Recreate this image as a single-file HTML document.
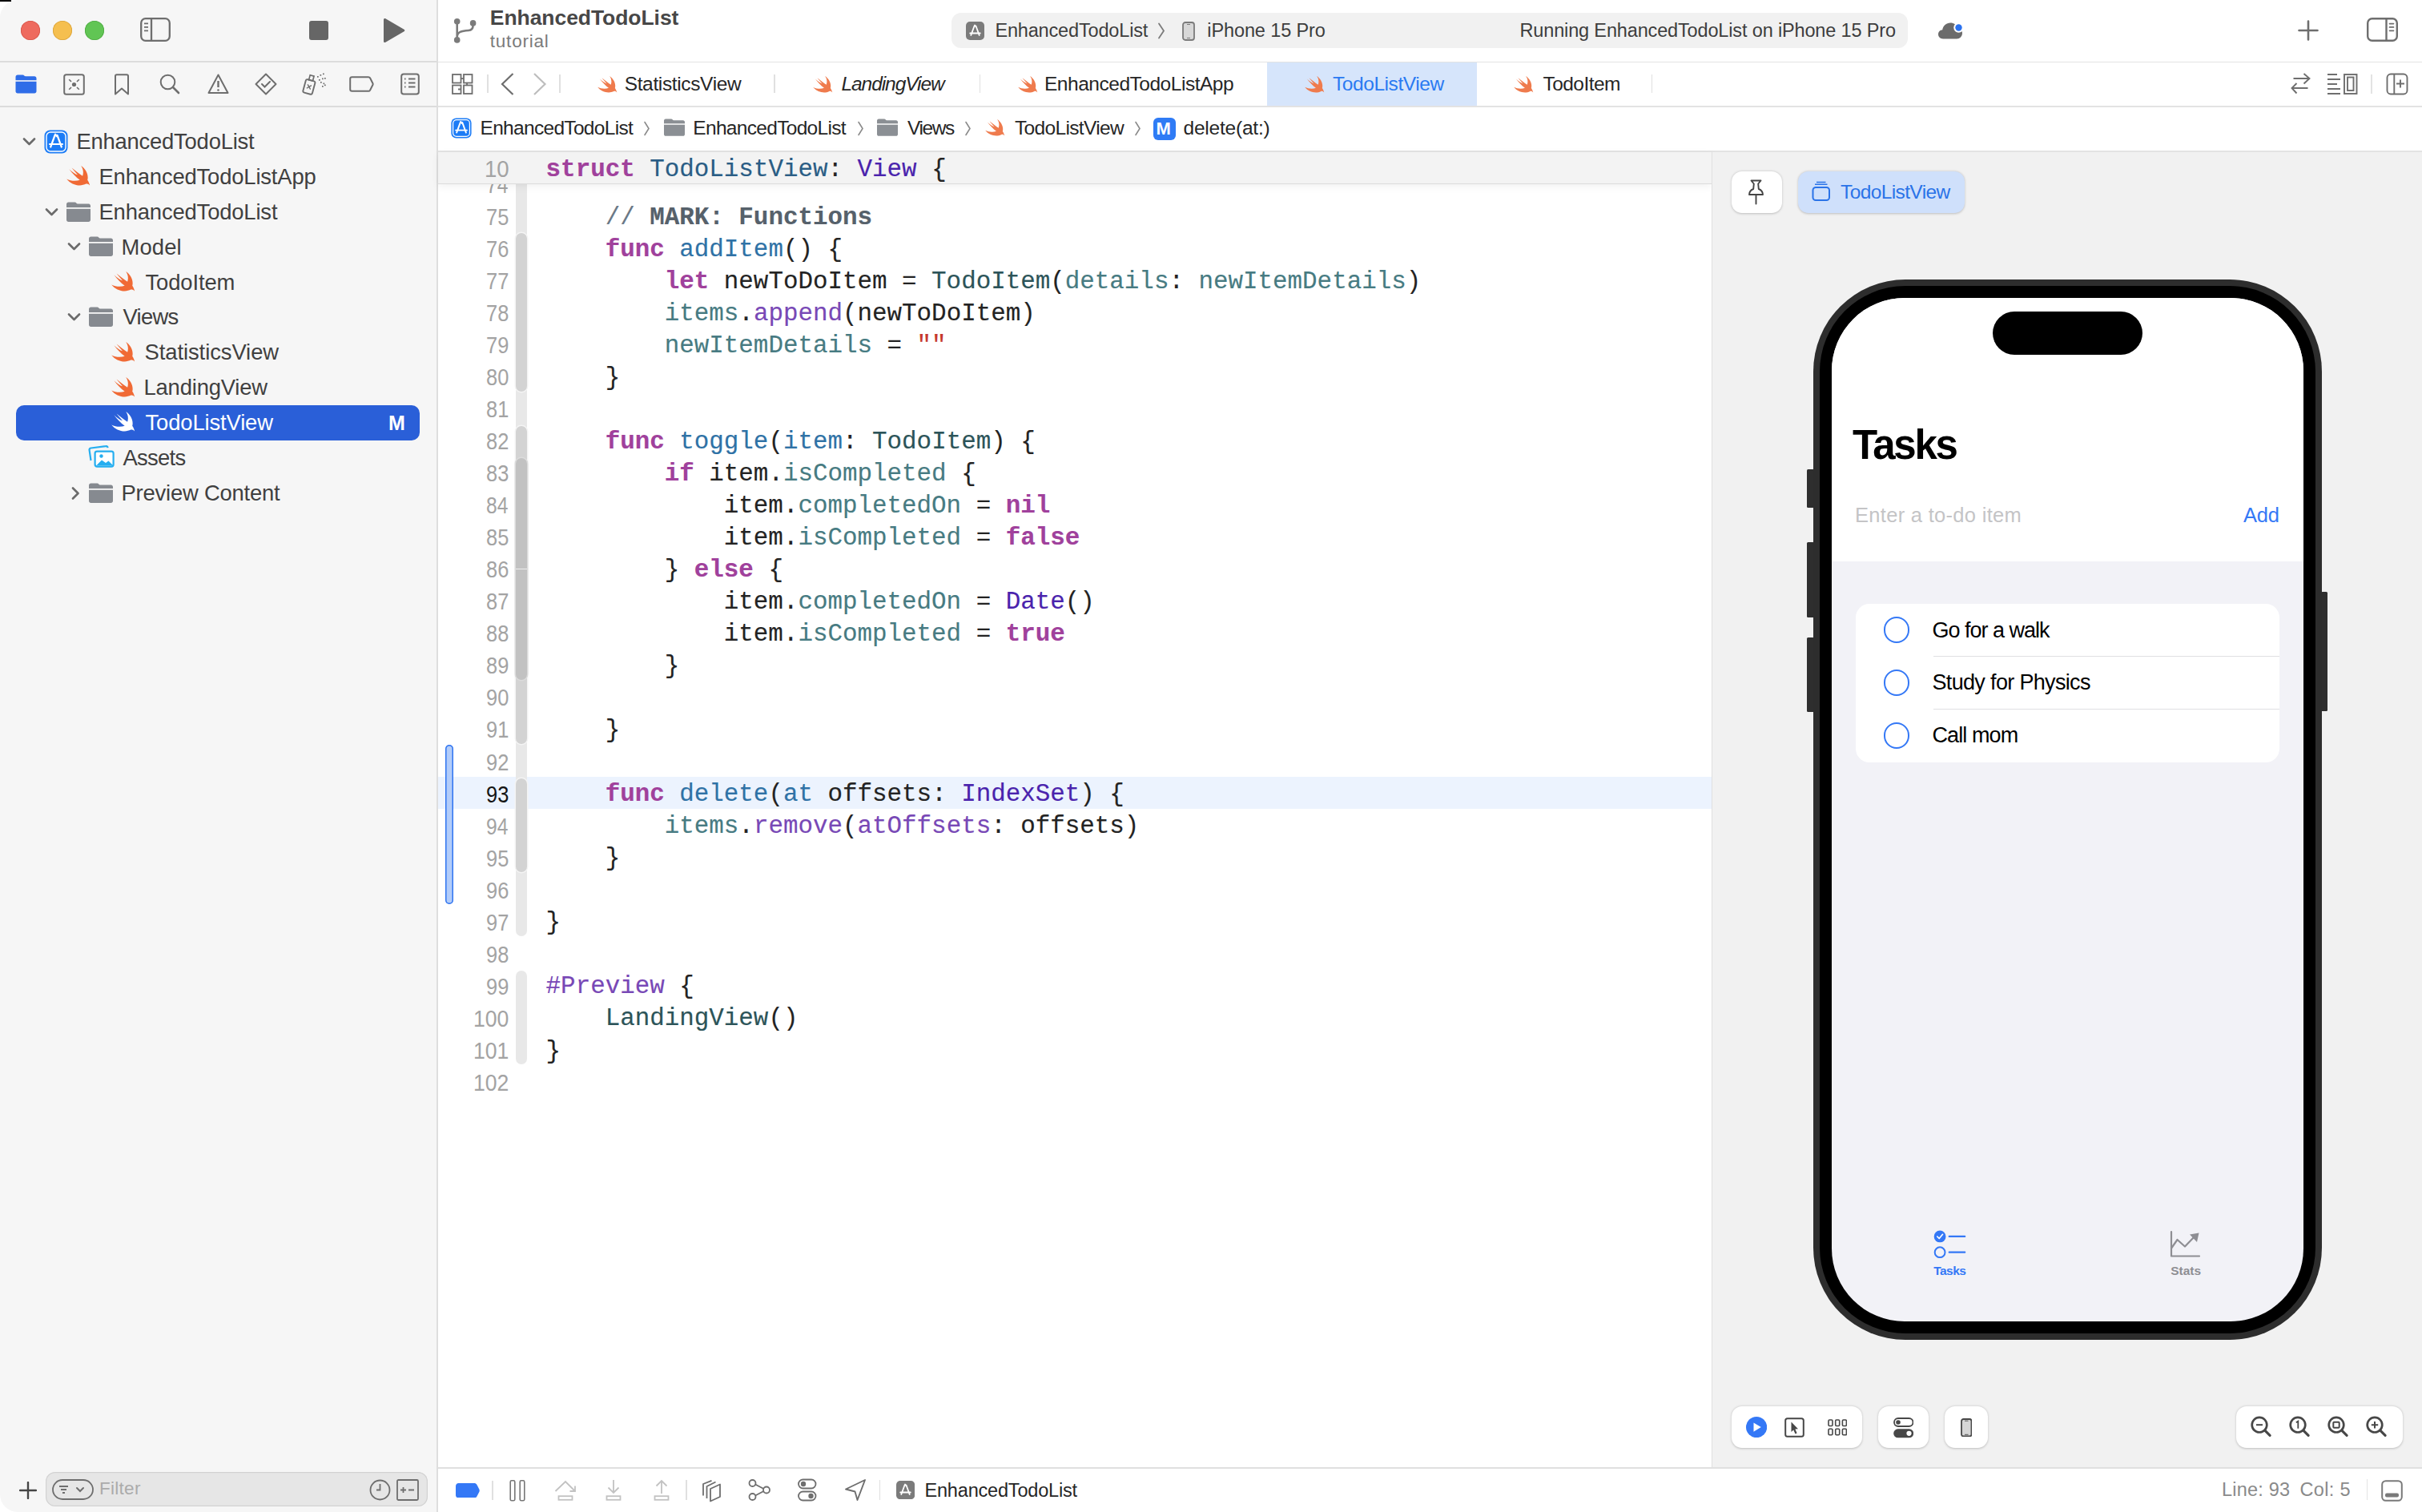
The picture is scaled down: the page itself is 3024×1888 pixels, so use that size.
<!DOCTYPE html>
<html><head><meta charset="utf-8"><title>Xcode</title>
<style>
html,body{margin:0;padding:0;width:3024px;height:1888px;overflow:hidden;background:#ffffff;}
body{position:relative;font-family:"Liberation Sans",sans-serif;}
.a{position:absolute;}
.t{position:absolute;white-space:pre;line-height:1;}

</style></head><body>
<div class="a" style="left:0px;top:0px;width:545px;height:1888px;background:#f6f6f6;border-radius:0px;border-top-left-radius:22px;border-bottom-left-radius:22px;"></div>
<div class="a" style="left:545px;top:0px;width:1.5px;height:1888px;background:#dedede;border-radius:0px;"></div>
<div class="a" style="left:0px;top:0px;width:14px;height:1.5px;background:#000000;border-radius:0px;"></div>
<div class="a" style="left:0px;top:76.2px;width:545px;height:1.8px;background:#dcdcdc;border-radius:0px;"></div>
<div class="a" style="left:0px;top:132px;width:545px;height:1.8px;background:#dcdcdc;border-radius:0px;"></div>
<div class="a" style="left:25.700000000000003px;top:26px;width:24px;height:24px;border-radius:50%;background:#ee6a5e;box-shadow:inset 0 0 0 0.8px #d5554a;"></div>
<div class="a" style="left:65.9px;top:26px;width:24px;height:24px;border-radius:50%;background:#f5bf4f;box-shadow:inset 0 0 0 0.8px #d9a23a;"></div>
<div class="a" style="left:105.7px;top:26px;width:24px;height:24px;border-radius:50%;background:#61c554;box-shadow:inset 0 0 0 0.8px #4ea942;"></div>
<svg class="a" style="left:175px;top:22px;" width="39" height="30" viewBox="0 0 39 30"><rect x="1.2" y="1.2" width="35.6" height="27.6" rx="5.5" fill="none" stroke="#6e6e6e" stroke-width="2.3"/><path d="M14 1.5V28.5" stroke="#6e6e6e" stroke-width="2.3"/><path d="M5 7.3H10M5 11.8H10M5 16.3H10" stroke="#6e6e6e" stroke-width="1.7"/></svg>
<div class="a" style="left:386px;top:26px;width:24px;height:24px;background:#666666;border-radius:3px;"></div>
<svg class="a" style="left:477px;top:22px;" width="30" height="32" viewBox="0 0 30 32"><path d="M2 2.5C2 1.2 3.3 0.5 4.4 1.2L27.5 14.7C28.6 15.4 28.6 16.6 27.5 17.3L4.4 30.8C3.3 31.5 2 30.8 2 29.5Z" fill="#666666"/></svg>
<svg class="a" style="left:19px;top:93px;" width="27" height="24" viewBox="0 0 27 24"><path fill="#2f6de8" d="M3 0.5H9.5C11 0.5 11.5 2.3 13 2.3H24C25.4 2.3 26.5 3.4 26.5 4.8V21C26.5 22.4 25.4 23.5 24 23.5H3C1.6 23.5 0.5 22.4 0.5 21V3C0.5 1.6 1.6 0.5 3 0.5Z"/><rect x="0" y="7.2" width="27" height="1.6" fill="#f6f6f6"/></svg>
<svg class="a" style="left:79px;top:92px;" width="27" height="27" viewBox="0 0 27 27"><rect x="1.2" y="1.2" width="24.6" height="24.6" rx="2.5" fill="none" stroke="#6e6e6e" stroke-width="2"/><circle cx="13.5" cy="13.5" r="2.6" fill="#6e6e6e"/><path d="M7.2 7.2L10 10M19.8 7.2L17 10M7.2 19.8L10 17M19.8 19.8L17 17" stroke="#6e6e6e" stroke-width="1.6"/></svg>
<svg class="a" style="left:142px;top:92px;" width="20" height="27" viewBox="0 0 20 27"><path d="M2 25.5V3C2 2 2.8 1.2 3.8 1.2H16.2C17.2 1.2 18 2 18 3V25.5L10 18.5Z" fill="none" stroke="#6e6e6e" stroke-width="2" stroke-linejoin="round"/></svg>
<svg class="a" style="left:199px;top:92px;" width="27" height="27" viewBox="0 0 27 27"><circle cx="10.5" cy="10.5" r="8.8" fill="none" stroke="#6e6e6e" stroke-width="2"/><path d="M17 17L24 24" stroke="#6e6e6e" stroke-width="2.6" stroke-linecap="round"/></svg>
<svg class="a" style="left:259px;top:92px;" width="27" height="26" viewBox="0 0 27 26"><path d="M13.5 1.5L25.5 24H1.5Z" fill="none" stroke="#6e6e6e" stroke-width="2" stroke-linejoin="round"/><path d="M13.5 9V17" stroke="#6e6e6e" stroke-width="2.4"/><circle cx="13.5" cy="20.5" r="1.3" fill="#6e6e6e"/></svg>
<svg class="a" style="left:318px;top:91px;" width="28" height="28" viewBox="0 0 28 28"><path d="M14 1.5L26.5 14L14 26.5L1.5 14Z" fill="none" stroke="#6e6e6e" stroke-width="2" stroke-linejoin="round"/><path d="M9 14L12.5 17.5L19 11" fill="none" stroke="#6e6e6e" stroke-width="2" stroke-linecap="round"/></svg>
<svg class="a" style="left:377px;top:91px;" width="31" height="28" viewBox="0 0 31 28"><g transform="rotate(15 9 17)"><rect x="3" y="9" width="12" height="17" rx="2" fill="none" stroke="#6e6e6e" stroke-width="1.9"/><rect x="6.5" y="3" width="5" height="6" fill="none" stroke="#6e6e6e" stroke-width="1.7"/><path d="M6.5 15L11.5 20M11.5 15L6.5 20" stroke="#6e6e6e" stroke-width="1.4"/></g><g fill="#6e6e6e"><rect x="19" y="4" width="1.7" height="1.7"/><rect x="22.5" y="2" width="1.7" height="1.7"/><rect x="26" y="0.5" width="1.7" height="1.7"/><rect x="21" y="8" width="1.7" height="1.7"/><rect x="25" y="6.5" width="1.7" height="1.7"/><rect x="28" y="6" width="1.7" height="1.7"/><rect x="23" y="11" width="1.7" height="1.7"/><rect x="26.5" y="12.5" width="1.7" height="1.7"/><rect x="25" y="16" width="1.7" height="1.7"/><rect x="28" y="14.5" width="1.7" height="1.7"/></g></svg>
<svg class="a" style="left:436px;top:95px;" width="31" height="20" viewBox="0 0 31 20"><path d="M3.5 1.2H24C25 1.2 25.6 1.6 26 2.3L29.4 9C29.7 9.6 29.7 10.4 29.4 11L26 17.7C25.6 18.4 25 18.8 24 18.8H3.5C2.2 18.8 1.2 17.8 1.2 16.5V3.5C1.2 2.2 2.2 1.2 3.5 1.2Z" fill="none" stroke="#6e6e6e" stroke-width="2"/></svg>
<svg class="a" style="left:500px;top:91px;" width="24" height="28" viewBox="0 0 24 28"><rect x="1.2" y="1.5" width="21.6" height="25" rx="2.8" fill="none" stroke="#6e6e6e" stroke-width="2"/><path d="M10 7.6H18.5M10 12.6H18.5M10 17.6H18.5" stroke="#6e6e6e" stroke-width="2"/><path d="M5 7.6H6.5M5 12.6H6.5M5 17.6H6.5" stroke="#6e6e6e" stroke-width="2"/></svg>
<svg class="a" style="left:27.5px;top:171.7px;" width="17" height="10" viewBox="0 0 16 10"><path d="M1.5 1.5L8 8L14.5 1.5" fill="none" stroke="#6b6b6b" stroke-width="2.6" stroke-linecap="round" stroke-linejoin="round"/></svg>
<svg class="a" style="left:54.5px;top:161.7px;" width="30" height="30" viewBox="0 0 30 30"><rect x="0.5" y="0.5" width="29" height="29" rx="7" fill="#1c7cf6"/><rect x="3" y="3" width="24" height="24" rx="5" fill="none" stroke="#ffffff" stroke-width="1.4"/><g stroke="#ffffff" stroke-width="2.2" stroke-linecap="round" fill="none"><path d="M13.5 7L8.2 21.5M16.5 7L21.8 21.5M14 5.7L16 8.2M7 18H23"/></g></svg>
<div class="t" style="left:95.50px;top:162.91px;font-family:'Liberation Sans';font-size:27.4px;color:#404040;letter-spacing:-0.218px;">EnhancedTodoList</div>
<svg class="a" style="left:83.3px;top:207.1px;" width="30" height="25" viewBox="0 0 30 25"><path fill="#f06a35" d="M18.2 0C24 4 28 11 26.2 17.8C27.6 19.8 28.6 22 29.1 24.6C27.8 22.8 26.2 22 24.5 22.6C17 26.5 6 24 0.26 16.4C5 19 12 19.5 16.7 17.7C12 14.5 7 9 3.4 4.2C7 7.5 11 10.5 14 11.35C11.5 8.5 8.5 5 6.6 2.5C11 6 16 10 20.1 12.7C21.5 8.5 21 4 18.2 0Z"/></svg>
<div class="t" style="left:123.50px;top:206.81px;font-family:'Liberation Sans';font-size:27.4px;color:#404040;letter-spacing:-0.160px;">EnhancedTodoListApp</div>
<svg class="a" style="left:55.5px;top:259.5px;" width="17" height="10" viewBox="0 0 16 10"><path d="M1.5 1.5L8 8L14.5 1.5" fill="none" stroke="#6b6b6b" stroke-width="2.6" stroke-linecap="round" stroke-linejoin="round"/></svg>
<svg class="a" style="left:83.0px;top:251.5px;" width="30" height="25" viewBox="0 0 30 25"><path fill="#868a90" d="M2.5 0.5H10.5C12 0.5 12.5 2.5 14 2.5H27.5C28.9 2.5 30 3.6 30 5V22.5C30 23.9 28.9 25 27.5 25H2.5C1.1 25 0 23.9 0 22.5V3C0 1.6 1.1 0.5 2.5 0.5Z"/><rect x="0" y="7" width="30" height="1.8" fill="#f6f6f6"/></svg>
<div class="t" style="left:123.50px;top:250.71px;font-family:'Liberation Sans';font-size:27.4px;color:#404040;letter-spacing:-0.158px;">EnhancedTodoList</div>
<svg class="a" style="left:83.5px;top:303.4px;" width="17" height="10" viewBox="0 0 16 10"><path d="M1.5 1.5L8 8L14.5 1.5" fill="none" stroke="#6b6b6b" stroke-width="2.6" stroke-linecap="round" stroke-linejoin="round"/></svg>
<svg class="a" style="left:111.0px;top:295.4px;" width="30" height="25" viewBox="0 0 30 25"><path fill="#868a90" d="M2.5 0.5H10.5C12 0.5 12.5 2.5 14 2.5H27.5C28.9 2.5 30 3.6 30 5V22.5C30 23.9 28.9 25 27.5 25H2.5C1.1 25 0 23.9 0 22.5V3C0 1.6 1.1 0.5 2.5 0.5Z"/><rect x="0" y="7" width="30" height="1.8" fill="#f6f6f6"/></svg>
<div class="t" style="left:151.50px;top:294.61px;font-family:'Liberation Sans';font-size:27.4px;color:#404040;letter-spacing:0.121px;">Model</div>
<svg class="a" style="left:139.3px;top:338.79999999999995px;" width="30" height="25" viewBox="0 0 30 25"><path fill="#f06a35" d="M18.2 0C24 4 28 11 26.2 17.8C27.6 19.8 28.6 22 29.1 24.6C27.8 22.8 26.2 22 24.5 22.6C17 26.5 6 24 0.26 16.4C5 19 12 19.5 16.7 17.7C12 14.5 7 9 3.4 4.2C7 7.5 11 10.5 14 11.35C11.5 8.5 8.5 5 6.6 2.5C11 6 16 10 20.1 12.7C21.5 8.5 21 4 18.2 0Z"/></svg>
<div class="t" style="left:181.50px;top:338.51px;font-family:'Liberation Sans';font-size:27.4px;color:#404040;letter-spacing:-0.121px;">TodoItem</div>
<svg class="a" style="left:83.5px;top:391.2px;" width="17" height="10" viewBox="0 0 16 10"><path d="M1.5 1.5L8 8L14.5 1.5" fill="none" stroke="#6b6b6b" stroke-width="2.6" stroke-linecap="round" stroke-linejoin="round"/></svg>
<svg class="a" style="left:111.0px;top:383.2px;" width="30" height="25" viewBox="0 0 30 25"><path fill="#868a90" d="M2.5 0.5H10.5C12 0.5 12.5 2.5 14 2.5H27.5C28.9 2.5 30 3.6 30 5V22.5C30 23.9 28.9 25 27.5 25H2.5C1.1 25 0 23.9 0 22.5V3C0 1.6 1.1 0.5 2.5 0.5Z"/><rect x="0" y="7" width="30" height="1.8" fill="#f6f6f6"/></svg>
<div class="t" style="left:153.50px;top:382.41px;font-family:'Liberation Sans';font-size:27.4px;color:#404040;letter-spacing:-0.718px;">Views</div>
<svg class="a" style="left:139.3px;top:426.59999999999997px;" width="30" height="25" viewBox="0 0 30 25"><path fill="#f06a35" d="M18.2 0C24 4 28 11 26.2 17.8C27.6 19.8 28.6 22 29.1 24.6C27.8 22.8 26.2 22 24.5 22.6C17 26.5 6 24 0.26 16.4C5 19 12 19.5 16.7 17.7C12 14.5 7 9 3.4 4.2C7 7.5 11 10.5 14 11.35C11.5 8.5 8.5 5 6.6 2.5C11 6 16 10 20.1 12.7C21.5 8.5 21 4 18.2 0Z"/></svg>
<div class="t" style="left:180.50px;top:426.31px;font-family:'Liberation Sans';font-size:27.4px;color:#404040;letter-spacing:-0.068px;">StatisticsView</div>
<svg class="a" style="left:139.3px;top:470.5px;" width="30" height="25" viewBox="0 0 30 25"><path fill="#f06a35" d="M18.2 0C24 4 28 11 26.2 17.8C27.6 19.8 28.6 22 29.1 24.6C27.8 22.8 26.2 22 24.5 22.6C17 26.5 6 24 0.26 16.4C5 19 12 19.5 16.7 17.7C12 14.5 7 9 3.4 4.2C7 7.5 11 10.5 14 11.35C11.5 8.5 8.5 5 6.6 2.5C11 6 16 10 20.1 12.7C21.5 8.5 21 4 18.2 0Z"/></svg>
<div class="t" style="left:179.50px;top:470.21px;font-family:'Liberation Sans';font-size:27.4px;color:#404040;letter-spacing:-0.178px;">LandingView</div>
<div class="a" style="left:20px;top:506.4px;width:504px;height:44px;background:#2a5fd8;border-radius:10px;"></div>
<svg class="a" style="left:139.3px;top:514.4px;" width="30" height="25" viewBox="0 0 30 25"><path fill="#ffffff" d="M18.2 0C24 4 28 11 26.2 17.8C27.6 19.8 28.6 22 29.1 24.6C27.8 22.8 26.2 22 24.5 22.6C17 26.5 6 24 0.26 16.4C5 19 12 19.5 16.7 17.7C12 14.5 7 9 3.4 4.2C7 7.5 11 10.5 14 11.35C11.5 8.5 8.5 5 6.6 2.5C11 6 16 10 20.1 12.7C21.5 8.5 21 4 18.2 0Z"/></svg>
<div class="t" style="left:181.50px;top:514.11px;font-family:'Liberation Sans';font-size:27.4px;color:#ffffff;letter-spacing:-0.128px;">TodoListView</div>
<svg class="a" style="left:109.5px;top:555.8px;" width="33" height="28" viewBox="0 0 33 28"><g fill="none" stroke="#25aef0" stroke-width="2.2"><path d="M3.5 19L1.6 6.2C1.4 4.9 2.3 3.7 3.6 3.5L22 1.2C23.3 1 24.4 1.9 24.6 3.2"/></g><rect x="8.6" y="7.6" width="23" height="19" rx="2.5" fill="#fff" stroke="#25aef0" stroke-width="2.2"/><path d="M10 25.5L17 18.5L22 22L25.5 19.5L30.5 24.5V25.5Z" fill="#25aef0"/><circle cx="16.5" cy="13.5" r="2.2" fill="#25aef0"/></svg>
<div class="t" style="left:153.50px;top:558.01px;font-family:'Liberation Sans';font-size:27.4px;color:#404040;letter-spacing:-0.701px;">Assets</div>
<svg class="a" style="left:89px;top:607.7px;" width="11" height="16" viewBox="0 0 10 16"><path d="M1.5 1.5L8 8L1.5 14.5" fill="none" stroke="#6b6b6b" stroke-width="2.6" stroke-linecap="round" stroke-linejoin="round"/></svg>
<svg class="a" style="left:111.0px;top:602.7px;" width="30" height="25" viewBox="0 0 30 25"><path fill="#868a90" d="M2.5 0.5H10.5C12 0.5 12.5 2.5 14 2.5H27.5C28.9 2.5 30 3.6 30 5V22.5C30 23.9 28.9 25 27.5 25H2.5C1.1 25 0 23.9 0 22.5V3C0 1.6 1.1 0.5 2.5 0.5Z"/><rect x="0" y="7" width="30" height="1.8" fill="#f6f6f6"/></svg>
<div class="t" style="left:151.50px;top:601.91px;font-family:'Liberation Sans';font-size:27.4px;color:#404040;letter-spacing:-0.197px;">Preview Content</div>
<div class="t" style="left:485.00px;top:516.15px;font-family:'Liberation Sans';font-size:25px;color:#ffffff;font-weight:700;">M</div>
<svg class="a" style="left:24px;top:1850px;" width="22" height="22" viewBox="0 0 22 22"><path d="M11 1V21M1 11H21" stroke="#454545" stroke-width="2.4" stroke-linecap="round"/></svg>
<div class="a" style="left:56.6px;top:1838.3px;width:477px;height:43px;background:#e6e6e6;border-radius:12px;box-shadow:inset 0 0 0 1.2px #d2d2d2;"></div>
<svg class="a" style="left:65px;top:1847px;" width="52" height="26" viewBox="0 0 52 26"><rect x="1" y="1" width="50" height="24" rx="12" fill="none" stroke="#6e6e6e" stroke-width="1.8"/><path d="M9 9H20M11 13H18M13 17H16" stroke="#6e6e6e" stroke-width="1.8"/><path d="M31 11L35 15L39 11" fill="none" stroke="#6e6e6e" stroke-width="2" stroke-linecap="round"/></svg>
<div class="t" style="left:123.90px;top:1848.28px;font-family:'Liberation Sans';font-size:22.5px;color:#ababab;letter-spacing:0.299px;">Filter</div>
<svg class="a" style="left:461px;top:1847px;" width="27" height="27" viewBox="0 0 27 27"><circle cx="13.5" cy="13.5" r="12" fill="none" stroke="#6e6e6e" stroke-width="1.8"/><path d="M13.5 6V13.5H9" fill="none" stroke="#6e6e6e" stroke-width="1.8"/></svg>
<svg class="a" style="left:495px;top:1847px;" width="28" height="27" viewBox="0 0 28 27"><rect x="1" y="1" width="26" height="25" rx="1.5" fill="none" stroke="#6e6e6e" stroke-width="1.8"/><path d="M5 13.5H12M8.5 10V17M15 13.5H22" stroke="#6e6e6e" stroke-width="1.8"/></svg>
<div class="a" style="left:546.5px;top:76.5px;width:2478px;height:1.5px;background:#e3e3e3;border-radius:0px;"></div>
<div class="a" style="left:546.5px;top:132px;width:2478px;height:1.5px;background:#e3e3e3;border-radius:0px;"></div>
<div class="a" style="left:546.5px;top:188px;width:2478px;height:1.5px;background:#e3e3e3;border-radius:0px;"></div>
<svg class="a" style="left:562px;top:18px;" width="36" height="38" viewBox="0 0 36 38"><g fill="#7b7b7b"><circle cx="8.7" cy="8.7" r="3.8"/><circle cx="28.6" cy="10.9" r="3.8"/><circle cx="8.7" cy="31.9" r="3.8"/></g><path d="M8.7 9V32M28.6 11V13.5C28.6 17.5 27 19.8 23 20C14 20.5 9 22 8.7 28" fill="none" stroke="#7b7b7b" stroke-width="2.6"/></svg>
<div class="t" style="left:611.80px;top:9.28px;font-family:'Liberation Sans';font-size:26.5px;color:#474747;font-weight:700;letter-spacing:-0.061px;">EnhancedTodoList</div>
<div class="t" style="left:611.80px;top:40.67px;font-family:'Liberation Sans';font-size:22.5px;color:#7b7b7b;letter-spacing:0.781px;">tutorial</div>
<div class="a" style="left:1188px;top:16px;width:1194px;height:44px;background:#f1f1f1;border-radius:12px;"></div>
<svg class="a" style="left:1206px;top:26.8px;" width="23" height="23" viewBox="0 0 23 23"><rect x="0" y="0" width="23" height="23" rx="5" fill="#7b7b7b"/><g stroke="#fff" stroke-width="1.8" stroke-linecap="round" fill="none"><path d="M10.5 5.5L6.3 17M12.5 5.5L16.7 17M11 4.5L12.5 6.5M5.2 14.5H17.8"/></g></svg>
<div class="t" style="left:1242.40px;top:26.82px;font-family:'Liberation Sans';font-size:23.5px;color:#3d3d3d;letter-spacing:-0.163px;">EnhancedTodoList</div>
<svg class="a" style="left:1445px;top:28px;" width="10" height="21" viewBox="0 0 10 21"><path d="M2 1.5L8 10.5L2 19.5" fill="none" stroke="#7b7b7b" stroke-width="1.8" stroke-linecap="round"/></svg>
<svg class="a" style="left:1476px;top:26.8px;" width="16" height="24" viewBox="0 0 16 24"><rect x="1" y="1" width="14" height="22" rx="3" fill="#d8d8d8" stroke="#7b7b7b" stroke-width="1.8"/><path d="M6 3.5H10M6 20.5H10" stroke="#7b7b7b" stroke-width="1"/></svg>
<div class="t" style="left:1507.30px;top:26.82px;font-family:'Liberation Sans';font-size:23.5px;color:#3d3d3d;letter-spacing:-0.114px;">iPhone 15 Pro</div>
<div class="t" style="left:1897.50px;top:26.82px;font-family:'Liberation Sans';font-size:23.5px;color:#3d3d3d;letter-spacing:-0.150px;">Running EnhancedTodoList on iPhone 15 Pro</div>
<svg class="a" style="left:2419px;top:26px;" width="36" height="24" viewBox="0 0 36 24"><path d="M7 22.5C3.5 22.5 1 20 1 16.8C1 13.8 3.2 11.5 6.2 11.2C7 6.2 11 2.5 16.2 2.5C20.5 2.5 24 5 25.5 8.8C28.5 9.2 31 11.8 31 15.5C31 19.2 28 22.5 24.2 22.5Z" fill="#6b6b6b"/><circle cx="26.5" cy="8.5" r="6.2" fill="#ffffff"/><circle cx="26.5" cy="8.5" r="4.2" fill="#2a72f0"/></svg>
<svg class="a" style="left:2869px;top:25px;" width="26" height="26" viewBox="0 0 26 26"><path d="M13 1.5V24.5M1.5 13H24.5" stroke="#6e6e6e" stroke-width="2.6" stroke-linecap="round"/></svg>
<svg class="a" style="left:2955px;top:22px;" width="39" height="30" viewBox="0 0 39 30"><rect x="1.2" y="1.2" width="36.6" height="27.6" rx="5.5" fill="none" stroke="#6e6e6e" stroke-width="2.4"/><path d="M24.5 1.5V28.5" stroke="#6e6e6e" stroke-width="2.4"/><path d="M28.5 7.6H33.5M28.5 11.9H33.5M28.5 16.3H33.5" stroke="#6e6e6e" stroke-width="1.7" stroke-linecap="round"/></svg>
<svg class="a" style="left:564px;top:92px;" width="27" height="26" viewBox="0 0 27 26"><g fill="none" stroke="#6e6e6e" stroke-width="1.8"><rect x="1" y="1" width="10.5" height="10.5"/><rect x="15" y="1" width="10.5" height="10.5"/><rect x="1" y="14.5" width="10.5" height="10.5"/><rect x="15" y="14.5" width="10.5" height="10.5"/><path d="M11.5 6.2H15M19 11.5V14.5M8 19.5H11.5"/></g></svg>
<div class="a" style="left:608.3px;top:93.2px;width:1.5px;height:23.3px;background:#e0e0e0;border-radius:0px;"></div>
<svg class="a" style="left:624px;top:90px;" width="20" height="30" viewBox="0 0 20 30"><path d="M16.5 2L3 15L16.5 28" fill="none" stroke="#6e6e6e" stroke-width="2.2"/></svg>
<svg class="a" style="left:664px;top:90px;" width="20" height="30" viewBox="0 0 20 30"><path d="M3 2L16.5 15L3 28" fill="none" stroke="#bdbdbd" stroke-width="2.2"/></svg>
<div class="a" style="left:698.3px;top:93.2px;width:1.5px;height:23.3px;background:#e0e0e0;border-radius:0px;"></div>
<div class="a" style="left:1582px;top:77.8px;width:262px;height:54.5px;background:#d6e5fb;border-radius:0px;"></div>
<svg class="a" style="left:745.7px;top:94.7px;" width="25" height="21" viewBox="0 0 30 25"><path fill="#ef7b4d" d="M18.2 0C24 4 28 11 26.2 17.8C27.6 19.8 28.6 22 29.1 24.6C27.8 22.8 26.2 22 24.5 22.6C17 26.5 6 24 0.26 16.4C5 19 12 19.5 16.7 17.7C12 14.5 7 9 3.4 4.2C7 7.5 11 10.5 14 11.35C11.5 8.5 8.5 5 6.6 2.5C11 6 16 10 20.1 12.7C21.5 8.5 21 4 18.2 0Z"/></svg>
<div class="t" style="left:779.70px;top:92.67px;font-family:'Liberation Sans';font-size:24.5px;color:#262626;letter-spacing:-0.361px;">StatisticsView</div>
<svg class="a" style="left:1014.8px;top:94.7px;" width="25" height="21" viewBox="0 0 30 25"><path fill="#ef7b4d" d="M18.2 0C24 4 28 11 26.2 17.8C27.6 19.8 28.6 22 29.1 24.6C27.8 22.8 26.2 22 24.5 22.6C17 26.5 6 24 0.26 16.4C5 19 12 19.5 16.7 17.7C12 14.5 7 9 3.4 4.2C7 7.5 11 10.5 14 11.35C11.5 8.5 8.5 5 6.6 2.5C11 6 16 10 20.1 12.7C21.5 8.5 21 4 18.2 0Z"/></svg>
<div class="t" style="left:1050.50px;top:92.67px;font-family:'Liberation Sans';font-size:24.5px;color:#262626;font-style:italic;letter-spacing:-1.067px;">LandingView</div>
<svg class="a" style="left:1270.8px;top:94.7px;" width="25" height="21" viewBox="0 0 30 25"><path fill="#ef7b4d" d="M18.2 0C24 4 28 11 26.2 17.8C27.6 19.8 28.6 22 29.1 24.6C27.8 22.8 26.2 22 24.5 22.6C17 26.5 6 24 0.26 16.4C5 19 12 19.5 16.7 17.7C12 14.5 7 9 3.4 4.2C7 7.5 11 10.5 14 11.35C11.5 8.5 8.5 5 6.6 2.5C11 6 16 10 20.1 12.7C21.5 8.5 21 4 18.2 0Z"/></svg>
<div class="t" style="left:1304.00px;top:92.67px;font-family:'Liberation Sans';font-size:24.5px;color:#262626;letter-spacing:-0.476px;">EnhancedTodoListApp</div>
<svg class="a" style="left:1628.8px;top:94.7px;" width="25" height="21" viewBox="0 0 30 25"><path fill="#ef7b4d" d="M18.2 0C24 4 28 11 26.2 17.8C27.6 19.8 28.6 22 29.1 24.6C27.8 22.8 26.2 22 24.5 22.6C17 26.5 6 24 0.26 16.4C5 19 12 19.5 16.7 17.7C12 14.5 7 9 3.4 4.2C7 7.5 11 10.5 14 11.35C11.5 8.5 8.5 5 6.6 2.5C11 6 16 10 20.1 12.7C21.5 8.5 21 4 18.2 0Z"/></svg>
<div class="t" style="left:1664.00px;top:92.67px;font-family:'Liberation Sans';font-size:24.5px;color:#2a7af2;letter-spacing:-0.429px;">TodoListView</div>
<svg class="a" style="left:1890px;top:94.7px;" width="25" height="21" viewBox="0 0 30 25"><path fill="#ef7b4d" d="M18.2 0C24 4 28 11 26.2 17.8C27.6 19.8 28.6 22 29.1 24.6C27.8 22.8 26.2 22 24.5 22.6C17 26.5 6 24 0.26 16.4C5 19 12 19.5 16.7 17.7C12 14.5 7 9 3.4 4.2C7 7.5 11 10.5 14 11.35C11.5 8.5 8.5 5 6.6 2.5C11 6 16 10 20.1 12.7C21.5 8.5 21 4 18.2 0Z"/></svg>
<div class="t" style="left:1926.50px;top:92.67px;font-family:'Liberation Sans';font-size:24.5px;color:#262626;letter-spacing:-0.552px;">TodoItem</div>
<div class="a" style="left:966px;top:93.2px;width:1.5px;height:23.3px;background:#e0e0e0;border-radius:0px;"></div>
<div class="a" style="left:1222.5px;top:93.2px;width:1.5px;height:23.3px;background:#e0e0e0;border-radius:0px;"></div>
<div class="a" style="left:2061.5px;top:93.2px;width:1.5px;height:23.3px;background:#e0e0e0;border-radius:0px;"></div>
<svg class="a" style="left:2859px;top:91px;" width="27" height="28" viewBox="0 0 27 28"><g fill="none" stroke="#6e6e6e" stroke-width="1.9"><path d="M4.5 7H24.5M17.5 1L24.5 7L17.5 13.5M22.5 19H2.5M8.5 13L2.5 19L8.5 25.5"/></g></svg>
<svg class="a" style="left:2905px;top:91px;" width="39" height="28" viewBox="0 0 39 28"><g fill="none" stroke="#6e6e6e" stroke-width="1.9"><path d="M1 2H13M1 8H17M1 14H13M1 20H17M1 26H17"/><rect x="22" y="2" width="15.5" height="24"/><rect x="26" y="5.5" width="7.5" height="16.5"/></g></svg>
<div class="a" style="left:2960.3px;top:93.3px;width:1.5px;height:23.3px;background:#e3e3e3;border-radius:0px;"></div>
<svg class="a" style="left:2979px;top:91px;" width="28" height="28" viewBox="0 0 28 28"><g fill="none" stroke="#6e6e6e" stroke-width="1.9"><rect x="1.5" y="1.5" width="25" height="25" rx="4.5"/><path d="M10.3 1.5V26.5M18 8.5V18.5M13 13.5H23"/></g></svg>
<svg class="a" style="left:562.5px;top:147.3px;" width="26" height="26" viewBox="0 0 30 30"><rect x="0.5" y="0.5" width="29" height="29" rx="7" fill="#1c7cf6"/><rect x="3" y="3" width="24" height="24" rx="5" fill="none" stroke="#ffffff" stroke-width="1.4"/><g stroke="#ffffff" stroke-width="2.2" stroke-linecap="round" fill="none"><path d="M13.5 7L8.2 21.5M16.5 7L21.8 21.5M14 5.7L16 8.2M7 18H23"/></g></svg>
<div class="t" style="left:599.50px;top:148.48px;font-family:'Liberation Sans';font-size:24.5px;color:#262626;letter-spacing:-0.686px;">EnhancedTodoList</div>
<svg class="a" style="left:803px;top:151px;" width="9" height="19" viewBox="0 0 9 19"><path d="M2 1.5L7 9.5L2 17.5" fill="none" stroke="#8a8a8a" stroke-width="1.6" stroke-linecap="round"/></svg>
<svg class="a" style="left:829px;top:148px;" width="26" height="22" viewBox="0 0 30 25"><path fill="#8b8f94" d="M2.5 0.5H10.5C12 0.5 12.5 2.5 14 2.5H27.5C28.9 2.5 30 3.6 30 5V22.5C30 23.9 28.9 25 27.5 25H2.5C1.1 25 0 23.9 0 22.5V3C0 1.6 1.1 0.5 2.5 0.5Z"/><rect x="0" y="7" width="30" height="1.8" fill="#f6f6f6"/></svg>
<div class="t" style="left:865.30px;top:148.48px;font-family:'Liberation Sans';font-size:24.5px;color:#262626;letter-spacing:-0.686px;">EnhancedTodoList</div>
<svg class="a" style="left:1069.5px;top:151px;" width="9" height="19" viewBox="0 0 9 19"><path d="M2 1.5L7 9.5L2 17.5" fill="none" stroke="#8a8a8a" stroke-width="1.6" stroke-linecap="round"/></svg>
<svg class="a" style="left:1095px;top:148px;" width="26" height="22" viewBox="0 0 30 25"><path fill="#8b8f94" d="M2.5 0.5H10.5C12 0.5 12.5 2.5 14 2.5H27.5C28.9 2.5 30 3.6 30 5V22.5C30 23.9 28.9 25 27.5 25H2.5C1.1 25 0 23.9 0 22.5V3C0 1.6 1.1 0.5 2.5 0.5Z"/><rect x="0" y="7" width="30" height="1.8" fill="#f6f6f6"/></svg>
<div class="t" style="left:1133.00px;top:148.48px;font-family:'Liberation Sans';font-size:24.5px;color:#262626;letter-spacing:-1.415px;">Views</div>
<svg class="a" style="left:1203.5px;top:151px;" width="9" height="19" viewBox="0 0 9 19"><path d="M2 1.5L7 9.5L2 17.5" fill="none" stroke="#8a8a8a" stroke-width="1.6" stroke-linecap="round"/></svg>
<svg class="a" style="left:1229.5px;top:149px;" width="25" height="21" viewBox="0 0 30 25"><path fill="#ef7b4d" d="M18.2 0C24 4 28 11 26.2 17.8C27.6 19.8 28.6 22 29.1 24.6C27.8 22.8 26.2 22 24.5 22.6C17 26.5 6 24 0.26 16.4C5 19 12 19.5 16.7 17.7C12 14.5 7 9 3.4 4.2C7 7.5 11 10.5 14 11.35C11.5 8.5 8.5 5 6.6 2.5C11 6 16 10 20.1 12.7C21.5 8.5 21 4 18.2 0Z"/></svg>
<div class="t" style="left:1267.00px;top:148.48px;font-family:'Liberation Sans';font-size:24.5px;color:#262626;letter-spacing:-0.656px;">TodoListView</div>
<svg class="a" style="left:1415.5px;top:151px;" width="9" height="19" viewBox="0 0 9 19"><path d="M2 1.5L7 9.5L2 17.5" fill="none" stroke="#8a8a8a" stroke-width="1.6" stroke-linecap="round"/></svg>
<div class="a" style="left:1440px;top:146.5px;width:28px;height:28px;background:#2f7bf5;border-radius:6px;"></div>
<div class="t" style="left:1443.50px;top:149.80px;font-family:'Liberation Sans';font-size:22px;color:#ffffff;font-weight:700;">M</div>
<div class="t" style="left:1477.50px;top:148.48px;font-family:'Liberation Sans';font-size:24.5px;color:#262626;letter-spacing:-0.215px;">delete(at:)</div>
<div class="a" style="left:546.5px;top:970.3px;width:1590.5px;height:40.02px;background:#ecf3fe;border-radius:0px;"></div>
<div class="a" style="left:556px;top:930px;width:9.8px;height:199.4px;background:#b2ccfa;border-radius:5px;box-shadow:inset 0 0 0 1.5px #2f74f0;"></div>
<div class="a" style="left:644.2px;top:220px;width:13.9px;height:949.4000000000001px;background:#e8e8e8;border-radius:0px;border-radius:0 0 7px 7px;"></div>
<div class="a" style="left:644.2px;top:291.4599999999999px;width:13.9px;height:197.10000000000002px;background:#d3d3d3;border-radius:7px;box-shadow:0 0 0 1.5px #f4f4f4;"></div>
<div class="a" style="left:644.2px;top:531.5799999999999px;width:13.9px;height:397.20000000000005px;background:#d3d3d3;border-radius:7px;box-shadow:0 0 0 1.5px #f4f4f4;"></div>
<div class="a" style="left:644.2px;top:971.8px;width:13.9px;height:117.05999999999995px;background:#d3d3d3;border-radius:7px;box-shadow:0 0 0 1.5px #f4f4f4;"></div>
<div class="a" style="left:644.2px;top:571.5999999999999px;width:13.9px;height:277.1400000000001px;background:#c2c2c2;border-radius:7px;box-shadow:0 0 0 1.5px #dcdcdc;"></div>
<div class="a" style="left:644.2px;top:709.6599999999999px;width:13.9px;height:1.5px;background:#efefef;border-radius:0px;"></div>
<div class="a" style="left:644.2px;top:1211.92px;width:13.9px;height:117.05999999999995px;background:#e8e8e8;border-radius:7px;"></div>
<div class="t" style="left:606.95px;transform:scaleX(0.8544);transform-origin:0 0;top:217.14px;font-family:'Liberation Sans';font-size:28.8px;color:#a3a3a3;">74</div>
<div class="t" style="left:606.92px;transform:scaleX(0.8829);transform-origin:0 0;top:257.16px;font-family:'Liberation Sans';font-size:28.8px;color:#a3a3a3;">75</div>
<div class="t" style="left:681.6px;top:256.99px;font-family:'Liberation Mono';font-size:30.86px;-webkit-text-stroke:0.15px currentColor;"><span style="color:#232323;">    </span><span style="color:#6a7886;">// </span><span style="color:#56616b;font-weight:bold;">MARK: Functions</span></div>
<div class="t" style="left:606.92px;transform:scaleX(0.8829);transform-origin:0 0;top:297.18px;font-family:'Liberation Sans';font-size:28.8px;color:#a3a3a3;">76</div>
<div class="t" style="left:681.6px;top:297.01px;font-family:'Liberation Mono';font-size:30.86px;-webkit-text-stroke:0.15px currentColor;"><span style="color:#232323;">    </span><span style="color:#a0419c;font-weight:bold;">func</span><span style="color:#232323;"> </span><span style="color:#2f72a6;">addItem</span><span style="color:#232323;">() {</span></div>
<div class="t" style="left:606.92px;transform:scaleX(0.8829);transform-origin:0 0;top:337.20px;font-family:'Liberation Sans';font-size:28.8px;color:#a3a3a3;">77</div>
<div class="t" style="left:681.6px;top:337.03px;font-family:'Liberation Mono';font-size:30.86px;-webkit-text-stroke:0.15px currentColor;"><span style="color:#232323;">        </span><span style="color:#a0419c;font-weight:bold;">let</span><span style="color:#232323;"> newToDoItem = </span><span style="color:#2c5459;">TodoItem</span><span style="color:#232323;">(</span><span style="color:#477b82;">details</span><span style="color:#232323;">: </span><span style="color:#477b82;">newItemDetails</span><span style="color:#232323;">)</span></div>
<div class="t" style="left:606.92px;transform:scaleX(0.8829);transform-origin:0 0;top:377.22px;font-family:'Liberation Sans';font-size:28.8px;color:#a3a3a3;">78</div>
<div class="t" style="left:681.6px;top:377.05px;font-family:'Liberation Mono';font-size:30.86px;-webkit-text-stroke:0.15px currentColor;"><span style="color:#232323;">        </span><span style="color:#477b82;">items</span><span style="color:#232323;">.</span><span style="color:#7848b6;">append</span><span style="color:#232323;">(newToDoItem)</span></div>
<div class="t" style="left:606.92px;transform:scaleX(0.8829);transform-origin:0 0;top:417.24px;font-family:'Liberation Sans';font-size:28.8px;color:#a3a3a3;">79</div>
<div class="t" style="left:681.6px;top:417.07px;font-family:'Liberation Mono';font-size:30.86px;-webkit-text-stroke:0.15px currentColor;"><span style="color:#232323;">        </span><span style="color:#477b82;">newItemDetails</span><span style="color:#232323;"> = </span><span style="color:#c6372c;">&quot;&quot;</span></div>
<div class="t" style="left:606.92px;transform:scaleX(0.8829);transform-origin:0 0;top:457.26px;font-family:'Liberation Sans';font-size:28.8px;color:#a3a3a3;">80</div>
<div class="t" style="left:681.6px;top:457.09px;font-family:'Liberation Mono';font-size:30.86px;-webkit-text-stroke:0.15px currentColor;"><span style="color:#232323;">    }</span></div>
<div class="t" style="left:606.92px;transform:scaleX(0.8829);transform-origin:0 0;top:497.28px;font-family:'Liberation Sans';font-size:28.8px;color:#a3a3a3;">81</div>
<div class="t" style="left:606.92px;transform:scaleX(0.8829);transform-origin:0 0;top:537.30px;font-family:'Liberation Sans';font-size:28.8px;color:#a3a3a3;">82</div>
<div class="t" style="left:681.6px;top:537.13px;font-family:'Liberation Mono';font-size:30.86px;-webkit-text-stroke:0.15px currentColor;"><span style="color:#232323;">    </span><span style="color:#a0419c;font-weight:bold;">func</span><span style="color:#232323;"> </span><span style="color:#2f72a6;">toggle</span><span style="color:#232323;">(</span><span style="color:#2f72a6;">item</span><span style="color:#232323;">: </span><span style="color:#2c5459;">TodoItem</span><span style="color:#232323;">) {</span></div>
<div class="t" style="left:606.92px;transform:scaleX(0.8829);transform-origin:0 0;top:577.32px;font-family:'Liberation Sans';font-size:28.8px;color:#a3a3a3;">83</div>
<div class="t" style="left:681.6px;top:577.15px;font-family:'Liberation Mono';font-size:30.86px;-webkit-text-stroke:0.15px currentColor;"><span style="color:#232323;">        </span><span style="color:#a0419c;font-weight:bold;">if</span><span style="color:#232323;"> item.</span><span style="color:#477b82;">isCompleted</span><span style="color:#232323;"> {</span></div>
<div class="t" style="left:606.95px;transform:scaleX(0.8544);transform-origin:0 0;top:617.34px;font-family:'Liberation Sans';font-size:28.8px;color:#a3a3a3;">84</div>
<div class="t" style="left:681.6px;top:617.17px;font-family:'Liberation Mono';font-size:30.86px;-webkit-text-stroke:0.15px currentColor;"><span style="color:#232323;">            item.</span><span style="color:#477b82;">completedOn</span><span style="color:#232323;"> = </span><span style="color:#a0419c;font-weight:bold;">nil</span></div>
<div class="t" style="left:606.92px;transform:scaleX(0.8829);transform-origin:0 0;top:657.36px;font-family:'Liberation Sans';font-size:28.8px;color:#a3a3a3;">85</div>
<div class="t" style="left:681.6px;top:657.19px;font-family:'Liberation Mono';font-size:30.86px;-webkit-text-stroke:0.15px currentColor;"><span style="color:#232323;">            item.</span><span style="color:#477b82;">isCompleted</span><span style="color:#232323;"> = </span><span style="color:#a0419c;font-weight:bold;">false</span></div>
<div class="t" style="left:606.92px;transform:scaleX(0.8829);transform-origin:0 0;top:697.38px;font-family:'Liberation Sans';font-size:28.8px;color:#a3a3a3;">86</div>
<div class="t" style="left:681.6px;top:697.21px;font-family:'Liberation Mono';font-size:30.86px;-webkit-text-stroke:0.15px currentColor;"><span style="color:#232323;">        } </span><span style="color:#a0419c;font-weight:bold;">else</span><span style="color:#232323;"> {</span></div>
<div class="t" style="left:606.92px;transform:scaleX(0.8829);transform-origin:0 0;top:737.40px;font-family:'Liberation Sans';font-size:28.8px;color:#a3a3a3;">87</div>
<div class="t" style="left:681.6px;top:737.23px;font-family:'Liberation Mono';font-size:30.86px;-webkit-text-stroke:0.15px currentColor;"><span style="color:#232323;">            item.</span><span style="color:#477b82;">completedOn</span><span style="color:#232323;"> = </span><span style="color:#4a23ad;">Date</span><span style="color:#232323;">()</span></div>
<div class="t" style="left:606.92px;transform:scaleX(0.8829);transform-origin:0 0;top:777.42px;font-family:'Liberation Sans';font-size:28.8px;color:#a3a3a3;">88</div>
<div class="t" style="left:681.6px;top:777.25px;font-family:'Liberation Mono';font-size:30.86px;-webkit-text-stroke:0.15px currentColor;"><span style="color:#232323;">            item.</span><span style="color:#477b82;">isCompleted</span><span style="color:#232323;"> = </span><span style="color:#a0419c;font-weight:bold;">true</span></div>
<div class="t" style="left:606.92px;transform:scaleX(0.8829);transform-origin:0 0;top:817.44px;font-family:'Liberation Sans';font-size:28.8px;color:#a3a3a3;">89</div>
<div class="t" style="left:681.6px;top:817.27px;font-family:'Liberation Mono';font-size:30.86px;-webkit-text-stroke:0.15px currentColor;"><span style="color:#232323;">        }</span></div>
<div class="t" style="left:606.92px;transform:scaleX(0.8829);transform-origin:0 0;top:857.46px;font-family:'Liberation Sans';font-size:28.8px;color:#a3a3a3;">90</div>
<div class="t" style="left:606.92px;transform:scaleX(0.8829);transform-origin:0 0;top:897.48px;font-family:'Liberation Sans';font-size:28.8px;color:#a3a3a3;">91</div>
<div class="t" style="left:681.6px;top:897.31px;font-family:'Liberation Mono';font-size:30.86px;-webkit-text-stroke:0.15px currentColor;"><span style="color:#232323;">    }</span></div>
<div class="t" style="left:606.92px;transform:scaleX(0.8829);transform-origin:0 0;top:937.50px;font-family:'Liberation Sans';font-size:28.8px;color:#a3a3a3;">92</div>
<div class="t" style="left:606.92px;transform:scaleX(0.8829);transform-origin:0 0;top:977.52px;font-family:'Liberation Sans';font-size:28.8px;color:#151515;">93</div>
<div class="t" style="left:681.6px;top:977.35px;font-family:'Liberation Mono';font-size:30.86px;-webkit-text-stroke:0.15px currentColor;"><span style="color:#232323;">    </span><span style="color:#a0419c;font-weight:bold;">func</span><span style="color:#232323;"> </span><span style="color:#2f72a6;">delete</span><span style="color:#232323;">(</span><span style="color:#2f72a6;">at</span><span style="color:#232323;"> offsets: </span><span style="color:#4a23ad;">IndexSet</span><span style="color:#232323;">) {</span></div>
<div class="t" style="left:606.95px;transform:scaleX(0.8544);transform-origin:0 0;top:1017.54px;font-family:'Liberation Sans';font-size:28.8px;color:#a3a3a3;">94</div>
<div class="t" style="left:681.6px;top:1017.37px;font-family:'Liberation Mono';font-size:30.86px;-webkit-text-stroke:0.15px currentColor;"><span style="color:#232323;">        </span><span style="color:#477b82;">items</span><span style="color:#232323;">.</span><span style="color:#7848b6;">remove</span><span style="color:#232323;">(</span><span style="color:#7848b6;">atOffsets</span><span style="color:#232323;">: offsets)</span></div>
<div class="t" style="left:606.92px;transform:scaleX(0.8829);transform-origin:0 0;top:1057.56px;font-family:'Liberation Sans';font-size:28.8px;color:#a3a3a3;">95</div>
<div class="t" style="left:681.6px;top:1057.39px;font-family:'Liberation Mono';font-size:30.86px;-webkit-text-stroke:0.15px currentColor;"><span style="color:#232323;">    }</span></div>
<div class="t" style="left:606.92px;transform:scaleX(0.8829);transform-origin:0 0;top:1097.58px;font-family:'Liberation Sans';font-size:28.8px;color:#a3a3a3;">96</div>
<div class="t" style="left:606.92px;transform:scaleX(0.8829);transform-origin:0 0;top:1137.60px;font-family:'Liberation Sans';font-size:28.8px;color:#a3a3a3;">97</div>
<div class="t" style="left:681.6px;top:1137.43px;font-family:'Liberation Mono';font-size:30.86px;-webkit-text-stroke:0.15px currentColor;"><span style="color:#232323;">}</span></div>
<div class="t" style="left:606.92px;transform:scaleX(0.8829);transform-origin:0 0;top:1177.62px;font-family:'Liberation Sans';font-size:28.8px;color:#a3a3a3;">98</div>
<div class="t" style="left:606.92px;transform:scaleX(0.8829);transform-origin:0 0;top:1217.64px;font-family:'Liberation Sans';font-size:28.8px;color:#a3a3a3;">99</div>
<div class="t" style="left:681.6px;top:1217.47px;font-family:'Liberation Mono';font-size:30.86px;-webkit-text-stroke:0.15px currentColor;"><span style="color:#7848b6;">#Preview</span><span style="color:#232323;"> {</span></div>
<div class="t" style="left:590.85px;transform:scaleX(0.9238);transform-origin:0 0;top:1257.66px;font-family:'Liberation Sans';font-size:28.8px;color:#a3a3a3;">100</div>
<div class="t" style="left:681.6px;top:1257.49px;font-family:'Liberation Mono';font-size:30.86px;-webkit-text-stroke:0.15px currentColor;"><span style="color:#232323;">    </span><span style="color:#2c5459;">LandingView</span><span style="color:#232323;">()</span></div>
<div class="t" style="left:590.85px;transform:scaleX(0.9238);transform-origin:0 0;top:1297.68px;font-family:'Liberation Sans';font-size:28.8px;color:#a3a3a3;">101</div>
<div class="t" style="left:681.6px;top:1297.51px;font-family:'Liberation Mono';font-size:30.86px;-webkit-text-stroke:0.15px currentColor;"><span style="color:#232323;">}</span></div>
<div class="t" style="left:590.85px;transform:scaleX(0.9238);transform-origin:0 0;top:1337.70px;font-family:'Liberation Sans';font-size:28.8px;color:#a3a3a3;">102</div>
<div class="a" style="left:546.5px;top:189.5px;width:1590.5px;height:39px;background:#f3f3f3;border-radius:0px;border-bottom:1.5px solid #dcdcdc;box-shadow:0 3px 10px rgba(0,0,0,0.06);"></div>
<div class="t" style="left:604.58px;transform:scaleX(0.9581);transform-origin:0 0;top:197.42px;font-family:'Liberation Sans';font-size:28.8px;color:#a3a3a3;">10</div>
<div class="t" style="left:681.6px;top:197.15px;font-family:'Liberation Mono';font-size:30.86px;-webkit-text-stroke:0.15px currentColor;"><span style="color:#a0419c;font-weight:bold;">struct</span><span style="color:#232323;"> </span><span style="color:#2a5d85;">TodoListView</span><span style="color:#232323;">: </span><span style="color:#4a23ad;">View</span><span style="color:#232323;"> {</span></div>
<div class="a" style="left:2137.5px;top:189.5px;width:886.5px;height:1642.5px;background:#f1f1f1;border-radius:0px;"></div>
<div class="a" style="left:2136.5px;top:189.5px;width:1.5px;height:1642.5px;background:#e0e0e0;border-radius:0px;"></div>
<div class="a" style="left:2162px;top:213.8px;width:63px;height:52.4px;background:#ffffff;border-radius:13px;box-shadow:0 0.5px 3px rgba(0,0,0,0.22);"></div>
<svg class="a" style="left:2181px;top:224px;" width="24" height="32" viewBox="0 0 24 32"><g fill="none" stroke="#444" stroke-width="1.9" stroke-linejoin="round"><path d="M5.5 1.5H17.5L14.2 5.5L14.8 12C18.5 13.5 20 16 20 19H3C3 16 4.5 13.5 8.2 12L8.8 5.5Z"/><path d="M11.5 19V30.5" stroke-linecap="round"/></g></svg>
<div class="a" style="left:2245px;top:213.8px;width:208px;height:52.4px;background:#cfe0fb;border-radius:13px;box-shadow:0 0.5px 3px rgba(0,0,0,0.22);"></div>
<svg class="a" style="left:2261px;top:225px;" width="26" height="28" viewBox="0 0 26 28"><g fill="none" stroke="#2a73e8" stroke-width="2"><rect x="2.5" y="9" width="20.5" height="16" rx="3.5"/></g><path d="M5 5.3H20.5M7 2.4H18.5" stroke="#2a73e8" stroke-width="1.5"/></svg>
<div class="t" style="left:2298.00px;top:227.68px;font-family:'Liberation Sans';font-size:24.5px;color:#2a73e8;letter-spacing:-0.611px;">TodoListView</div>
<div class="a" style="left:2255.5px;top:586.2px;width:9px;height:48.1px;background:#2e2e2e;border-radius:1.5px;"></div>
<div class="a" style="left:2255.5px;top:677.4px;width:9px;height:93.8px;background:#2e2e2e;border-radius:1.5px;"></div>
<div class="a" style="left:2255.5px;top:796.4px;width:9px;height:92.9px;background:#2e2e2e;border-radius:1.5px;"></div>
<div class="a" style="left:2898px;top:739px;width:7.5px;height:149px;background:#2e2e2e;border-radius:1.5px;"></div>
<div class="a" style="left:2263.5px;top:348.5px;width:635.5px;height:1324.5px;background:#2d2d2d;border-radius:115px;"></div>
<div class="a" style="left:2271.5px;top:356.5px;width:619.5px;height:1308.5px;background:#000000;border-radius:107px;"></div>
<div class="a" style="left:2286.6px;top:372px;width:589.4px;height:1278px;border-radius:91px;background:#f2f2f7;overflow:hidden;">
<div class="a" style="left:0;top:0;width:589.4px;height:329.20000000000005px;background:#ffffff;"></div>
</div>
<div class="a" style="left:2487.6px;top:389px;width:187px;height:54.3px;background:#000000;border-radius:27.2px;"></div>
<div class="t" style="left:2313.00px;top:529.55px;font-family:'Liberation Sans';font-size:51px;color:#000000;font-weight:700;letter-spacing:-2.240px;">Tasks</div>
<div class="t" style="left:2316.00px;top:630.73px;font-family:'Liberation Sans';font-size:25.5px;color:#c4c4c6;letter-spacing:0.298px;">Enter a to-do item</div>
<div class="t" style="left:2801.00px;top:630.73px;font-family:'Liberation Sans';font-size:25.5px;color:#3478f6;letter-spacing:-0.195px;">Add</div>
<div class="a" style="left:2317px;top:754.3px;width:529px;height:197.5px;background:#ffffff;border-radius:17px;"></div>
<div class="a" style="left:2351.5px;top:770.2px;width:28.6px;height:28.6px;border-radius:50%;border:2.2px solid #3478f6;"></div>
<div class="t" style="left:2412.50px;top:773.55px;font-family:'Liberation Sans';font-size:27px;color:#000000;letter-spacing:-1.005px;">Go for a walk</div>
<div class="a" style="left:2413.5px;top:819.0px;width:432.5px;height:1.2px;background:#e0e0e2;border-radius:0px;"></div>
<div class="a" style="left:2351.5px;top:836.1px;width:28.6px;height:28.6px;border-radius:50%;border:2.2px solid #3478f6;"></div>
<div class="t" style="left:2412.50px;top:839.45px;font-family:'Liberation Sans';font-size:27px;color:#000000;letter-spacing:-0.667px;">Study for Physics</div>
<div class="a" style="left:2413.5px;top:884.9px;width:432.5px;height:1.2px;background:#e0e0e2;border-radius:0px;"></div>
<div class="a" style="left:2351.5px;top:902.0px;width:28.6px;height:28.6px;border-radius:50%;border:2.2px solid #3478f6;"></div>
<div class="t" style="left:2412.50px;top:905.35px;font-family:'Liberation Sans';font-size:27px;color:#000000;letter-spacing:-0.903px;">Call mom</div>
<svg class="a" style="left:2412px;top:1534px;" width="44" height="40" viewBox="0 0 44 40"><circle cx="10.1" cy="9.9" r="7.4" fill="#3478f6"/><path d="M6.8 10L9.2 12.5L13.5 7.3" fill="none" stroke="#fff" stroke-width="1.7" stroke-linecap="round" stroke-linejoin="round"/><circle cx="10.1" cy="29.7" r="6.4" fill="none" stroke="#3478f6" stroke-width="2"/><path d="M21.7 9.9H41.2M21.7 29.7H41.2" stroke="#3478f6" stroke-width="2.2" stroke-linecap="round"/></svg>
<div class="t" style="left:2414.20px;top:1579.42px;font-family:'Liberation Sans';font-size:15.5px;color:#3478f6;font-weight:700;letter-spacing:-0.520px;">Tasks</div>
<svg class="a" style="left:2709px;top:1536px;" width="40" height="35" viewBox="0 0 40 35"><g fill="none" stroke="#8e8e93" stroke-width="2.2" stroke-linecap="round" stroke-linejoin="round"><path d="M2 2V32.5H37"/><path d="M2.5 22L9.5 12L19 20.5L31 8"/></g><path d="M25 5.5L36.5 3.5L34 15Z" fill="#8e8e93"/></svg>
<div class="t" style="left:2710.30px;top:1579.42px;font-family:'Liberation Sans';font-size:15.5px;color:#8e8e93;font-weight:700;letter-spacing:-0.020px;">Stats</div>
<div class="a" style="left:2162.1px;top:1756px;width:162.7px;height:52px;background:#ffffff;border-radius:13px;box-shadow:0 0.5px 3px rgba(0,0,0,0.22);"></div>
<div class="a" style="left:2345.2px;top:1756px;width:62.7px;height:52px;background:#ffffff;border-radius:13px;box-shadow:0 0.5px 3px rgba(0,0,0,0.22);"></div>
<div class="a" style="left:2428.2px;top:1756px;width:53.7px;height:52px;background:#ffffff;border-radius:13px;box-shadow:0 0.5px 3px rgba(0,0,0,0.22);"></div>
<div class="a" style="left:2792.2px;top:1756px;width:207.9px;height:52px;background:#ffffff;border-radius:13px;box-shadow:0 0.5px 3px rgba(0,0,0,0.22);"></div>
<svg class="a" style="left:2179.9px;top:1768.9px;" width="26.2" height="26.2" viewBox="0 0 26.2 26.2"><circle cx="13.1" cy="13.1" r="13.1" fill="#3478f6"/><path d="M9.5 7.5V18.7L18.8 13.1Z" fill="#fff"/></svg>
<svg class="a" style="left:2227.5px;top:1769.5px;" width="25" height="25" viewBox="0 0 25 25"><rect x="1.2" y="1.2" width="22.6" height="22.6" rx="2.5" fill="none" stroke="#474747" stroke-width="2"/><path d="M8.5 5.5L8.5 18L11.3 15.5L13.5 20.5L15.6 19.5L13.4 14.5L17 14.3Z" fill="#474747"/></svg>
<svg class="a" style="left:2281.5px;top:1771.5px;" width="24.5" height="21" viewBox="0 0 24.5 21"><g fill="none" stroke="#474747" stroke-width="1.6"><rect x="1" y="1" width="5" height="7.5" rx="1.2"/><rect x="9.7" y="1" width="5" height="7.5" rx="1.2"/><rect x="18.4" y="1" width="5" height="7.5" rx="1.2"/><rect x="1" y="12.3" width="5" height="7.5" rx="1.2"/><rect x="9.7" y="12.3" width="5" height="7.5" rx="1.2"/><rect x="18.4" y="12.3" width="5" height="7.5" rx="1.2"/></g></svg>
<svg class="a" style="left:2363.5px;top:1770px;" width="25.5" height="25.5" viewBox="0 0 25.5 25.5"><rect x="1" y="1" width="23.5" height="10" rx="5" fill="none" stroke="#474747" stroke-width="1.8"/><circle cx="6" cy="6" r="2.8" fill="#474747"/><rect x="0.2" y="14.3" width="25" height="11" rx="5.5" fill="#474747"/><circle cx="19.5" cy="19.8" r="3.1" fill="#fff"/></svg>
<svg class="a" style="left:2447.7px;top:1770.5px;" width="14.5" height="23.5" viewBox="0 0 14.5 23.5"><rect x="1" y="1" width="12.5" height="21.5" rx="2.5" fill="#d6d6d6" stroke="#474747" stroke-width="1.8"/><path d="M5 3.2H9.5M5 20.3H9.5" stroke="#474747" stroke-width="0.9"/></svg>
<svg class="a" style="left:2809.3px;top:1767px;" width="30" height="30" viewBox="0 0 30 30"><g transform="translate(12 12.2)"><circle cx="0" cy="0" r="9.3" fill="none" stroke="#474747" stroke-width="2.7"/><path d="M-4 0H4" stroke="#474747" stroke-width="2"/><path d="M6.8 7L13.1 13.2" stroke="#474747" stroke-width="3.2" stroke-linecap="round"/></g></svg>
<svg class="a" style="left:2857.3300000000004px;top:1767px;" width="30" height="30" viewBox="0 0 30 30"><g transform="translate(12 12.2)"><circle cx="0" cy="0" r="9.3" fill="none" stroke="#474747" stroke-width="2.7"/><path d="M-2.2 -3L0.3 -4.5V4.5" fill="none" stroke="#474747" stroke-width="1.8"/><path d="M6.8 7L13.1 13.2" stroke="#474747" stroke-width="3.2" stroke-linecap="round"/></g></svg>
<svg class="a" style="left:2905.36px;top:1767px;" width="30" height="30" viewBox="0 0 30 30"><g transform="translate(12 12.2)"><circle cx="0" cy="0" r="9.3" fill="none" stroke="#474747" stroke-width="2.7"/><rect x="-3.7" y="-3.5" width="7.4" height="7" rx="1" fill="none" stroke="#474747" stroke-width="2"/><path d="M6.8 7L13.1 13.2" stroke="#474747" stroke-width="3.2" stroke-linecap="round"/></g></svg>
<svg class="a" style="left:2953.3900000000003px;top:1767px;" width="30" height="30" viewBox="0 0 30 30"><g transform="translate(12 12.2)"><circle cx="0" cy="0" r="9.3" fill="none" stroke="#474747" stroke-width="2.7"/><path d="M-4.2 0H4.2M0 -4.2V4.2" stroke="#474747" stroke-width="2"/><path d="M6.8 7L13.1 13.2" stroke="#474747" stroke-width="3.2" stroke-linecap="round"/></g></svg>
<div class="a" style="left:546.5px;top:1832px;width:2477.5px;height:56px;background:#ffffff;border-radius:0px;"></div>
<div class="a" style="left:546.5px;top:1832px;width:2477.5px;height:1.5px;background:#e0e0e0;border-radius:0px;"></div>
<svg class="a" style="left:569px;top:1851.5px;" width="30" height="18.5" viewBox="0 0 30 18.5"><path d="M3.5 0H23C24.5 0 25.5 0.6 26.3 1.8L29.3 7.5C29.8 8.5 29.8 10 29.3 11L26.3 16.7C25.5 17.9 24.5 18.5 23 18.5H3.5C1.6 18.5 0 16.9 0 15V3.5C0 1.6 1.6 0 3.5 0Z" fill="#3478f6"/></svg>
<div class="a" style="left:614px;top:1848.5px;width:1.5px;height:24.5px;background:#e0e0e0;border-radius:0px;"></div>
<svg class="a" style="left:636px;top:1848px;" width="20" height="27" viewBox="0 0 20 27"><g fill="none" stroke="#777" stroke-width="1.6"><rect x="1.2" y="0.8" width="5.6" height="25" rx="1.6"/><rect x="13.2" y="0.8" width="5.6" height="25" rx="1.6"/></g></svg>
<svg class="a" style="left:692px;top:1847px;" width="28" height="28" viewBox="0 0 28 28"><g fill="none" stroke="#c2c2c2" stroke-width="1.8"><path d="M1.5 15L14 3L26 15"/><path d="M26 8.5V15H19.5"/><rect x="5.5" y="21.2" width="17" height="4.6"/></g></svg>
<svg class="a" style="left:756px;top:1847px;" width="20" height="28" viewBox="0 0 20 28"><g fill="none" stroke="#c2c2c2" stroke-width="1.8"><path d="M10 1V17M3.5 10.5L10 17L16.5 10.5"/><rect x="1.5" y="21.2" width="17" height="4.6"/></g></svg>
<svg class="a" style="left:816px;top:1847px;" width="20" height="28" viewBox="0 0 20 28"><g fill="none" stroke="#c2c2c2" stroke-width="1.8"><path d="M10 18V2M3.5 8.5L10 2L16.5 8.5"/><rect x="1.5" y="21.2" width="17" height="4.6"/></g></svg>
<div class="a" style="left:856px;top:1848px;width:1.5px;height:25px;background:#e0e0e0;border-radius:0px;"></div>
<svg class="a" style="left:875.5px;top:1847.5px;" width="25" height="28" viewBox="0 0 25 28"><g fill="none" stroke="#6e6e6e" stroke-width="1.8" stroke-linejoin="round"><path d="M11 26.5V11L23 5.5V21Z"/><path d="M6.5 23V8L17.5 2.5"/><path d="M2 19.5V5L12.5 0.9"/></g></svg>
<svg class="a" style="left:933.5px;top:1846px;" width="29" height="29" viewBox="0 0 29 29"><g fill="none" stroke="#6e6e6e" stroke-width="1.8"><circle cx="5.5" cy="6" r="4"/><circle cx="5.5" cy="23" r="4"/><circle cx="23" cy="14.5" r="4"/><path d="M9 7.5L19.5 13M9 21.5L19.5 16"/></g></svg>
<svg class="a" style="left:996px;top:1846px;" width="24" height="29" viewBox="0 0 24 29"><g fill="none" stroke="#6e6e6e" stroke-width="1.8"><rect x="1" y="1.5" width="21.5" height="11" rx="5.5"/><rect x="1" y="16.5" width="21.5" height="11" rx="5.5"/></g><circle cx="7" cy="7" r="3.2" fill="#6e6e6e"/><circle cx="16.5" cy="22" r="3.2" fill="#6e6e6e"/></svg>
<svg class="a" style="left:1054px;top:1846px;" width="28" height="29" viewBox="0 0 28 29"><path d="M2 13.5L26 2L16.5 27L13.5 16.5Z" fill="none" stroke="#6e6e6e" stroke-width="1.9" stroke-linejoin="round"/></svg>
<div class="a" style="left:1097.5px;top:1848px;width:1.5px;height:25px;background:#e0e0e0;border-radius:0px;"></div>
<svg class="a" style="left:1118.5px;top:1848.5px;" width="23.2" height="23.2" viewBox="0 0 23.2 23.2"><rect x="0" y="0" width="23.2" height="23.2" rx="5" fill="#7b7b7b"/><g stroke="#fff" stroke-width="1.8" stroke-linecap="round" fill="none"><path d="M10.5 5.5L6.3 17M12.5 5.5L16.7 17M11 4.5L12.5 6.5M5.2 14.5H17.8"/></g></svg>
<div class="t" style="left:1154.50px;top:1849.62px;font-family:'Liberation Sans';font-size:23.5px;color:#262626;letter-spacing:-0.189px;">EnhancedTodoList</div>
<div class="t" style="left:2774.00px;top:1849.03px;font-family:'Liberation Sans';font-size:23.5px;color:#8a8a8a;letter-spacing:0.206px;">Line: 93</div>
<div class="t" style="left:2871.50px;top:1849.03px;font-family:'Liberation Sans';font-size:23.5px;color:#8a8a8a;letter-spacing:0.336px;">Col: 5</div>
<div class="a" style="left:2954.5px;top:1847px;width:1.5px;height:26px;background:#e3e3e3;border-radius:0px;"></div>
<svg class="a" style="left:2973px;top:1848px;" width="27" height="27" viewBox="0 0 27 27"><rect x="1.2" y="1.2" width="24.6" height="24.6" rx="4.5" fill="none" stroke="#7a7a7a" stroke-width="2"/><rect x="5" y="16.5" width="17" height="5" rx="2" fill="#7a7a7a"/></svg>
</body></html>
